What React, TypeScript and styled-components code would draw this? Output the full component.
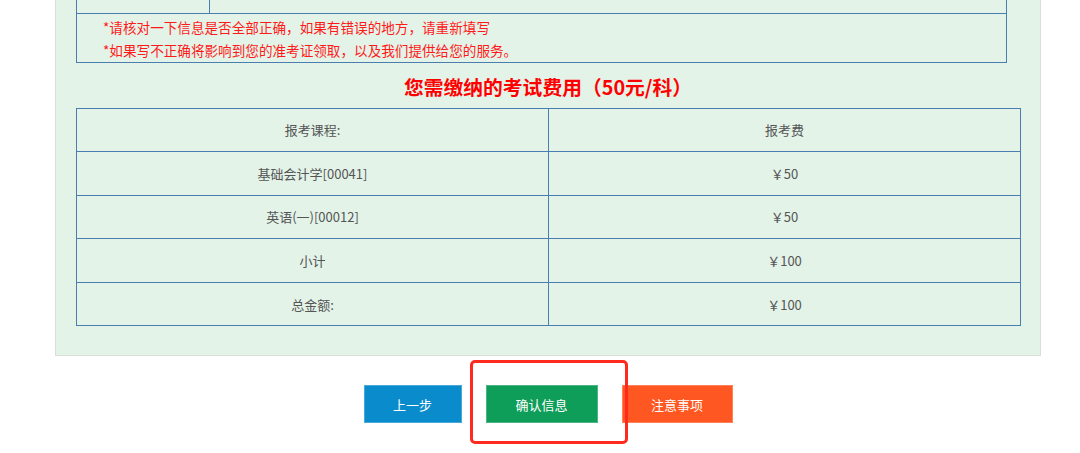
import styled, { createGlobalStyle } from 'styled-components';

const GlobalStyle = createGlobalStyle`
  body {
    margin: 0;
    background: #fff;
    font-family: "Noto Sans CJK SC", "Noto Sans", sans-serif;
  }
`;

const Page = styled.div`
  width: 986px;
  margin-left: 55px;
  padding-bottom: 40px;
`;

const Panel = styled.div`
  box-sizing: border-box;
  width: 986px;
  background: #e3f3e8;
  border: 1px solid #dcdcdc;
  border-top: none;
  padding: 0 20px 29px;
`;

const Table = styled.table<{ $width: number }>`
  width: ${(p) => p.$width}px;
  border-collapse: collapse;
  table-layout: fixed;

  td {
    border: 1px solid #4a7db0;
    padding: 0;
  }
`;

const StubRow = styled.tr`
  height: 13px;

  td {
    border-top: none;
  }
`;

const NoteCell = styled.td`
  height: 44px;
  padding: 2px 0 0 26px !important;
  vertical-align: top;
  color: #ff1a1a;
  font-size: 13.6px;
  line-height: 23px;
`;

const Title = styled.h2`
  margin: 0;
  height: 45px;
  line-height: 48px;
  text-align: center;
  color: #ff0000;
  font-size: 19.8px;
  font-weight: 700;
`;

const FeeCell = styled.td`
  height: 42.6px;
  text-align: center;
  vertical-align: middle;
  color: #555;
  font-size: 13px;
`;

const Actions = styled.div`
  display: flex;
  justify-content: center;
  gap: 24px;
  margin-top: 29px;
`;

const Button = styled.button<{ $bg: string; $w: number }>`
  width: ${(p) => p.$w}px;
  height: 38px;
  border: 1px solid rgba(255, 255, 255, 0.25);
  background: ${(p) => p.$bg};
  color: #fff;
  font-family: inherit;
  font-size: 13px;
  cursor: pointer;
`;

const Highlight = styled.div`
  position: relative;
  display: flex;

  &::after {
    content: '';
    position: absolute;
    top: -25px;
    left: -16px;
    right: -30px;
    bottom: -21px;
    border: 3px solid #ff2a1f;
    border-radius: 5px;
    pointer-events: none;
  }
`;

const fees = [
  ['报考课程:', '报考费'],
  ['基础会计学[00041]', '￥50'],
  ['英语(一)[00012]', '￥50'],
  ['小计', '￥100'],
  ['总金额:', '￥100'],
];

export default function App() {
  return (
    <>
      <GlobalStyle />
      <Page>
        <Panel>
          <Table $width={931}>
            <colgroup>
              <col style={{ width: 133 }} />
              <col />
            </colgroup>
            <tbody>
              <StubRow>
                <td />
                <td />
              </StubRow>
              <tr>
                <NoteCell colSpan={2}>
                  *请核对一下信息是否全部正确，如果有错误的地方，请重新填写
                  <br />
                  *如果写不正确将影响到您的准考证领取，以及我们提供给您的服务。
                </NoteCell>
              </tr>
            </tbody>
          </Table>
          <Title>您需缴纳的考试费用（50元/科）</Title>
          <Table $width={945}>
            <colgroup>
              <col style={{ width: 472 }} />
              <col />
            </colgroup>
            <tbody>
              {fees.map(([name, fee]) => (
                <tr key={name}>
                  <FeeCell>{name}</FeeCell>
                  <FeeCell>{fee}</FeeCell>
                </tr>
              ))}
            </tbody>
          </Table>
        </Panel>
        <Actions>
          <Button $bg="#0a8bcc" $w={98}>上一步</Button>
          <Highlight>
            <Button $bg="#0f9d5a" $w={112}>确认信息</Button>
          </Highlight>
          <Button $bg="#ff5722" $w={111}>注意事项</Button>
        </Actions>
      </Page>
    </>
  );
}
